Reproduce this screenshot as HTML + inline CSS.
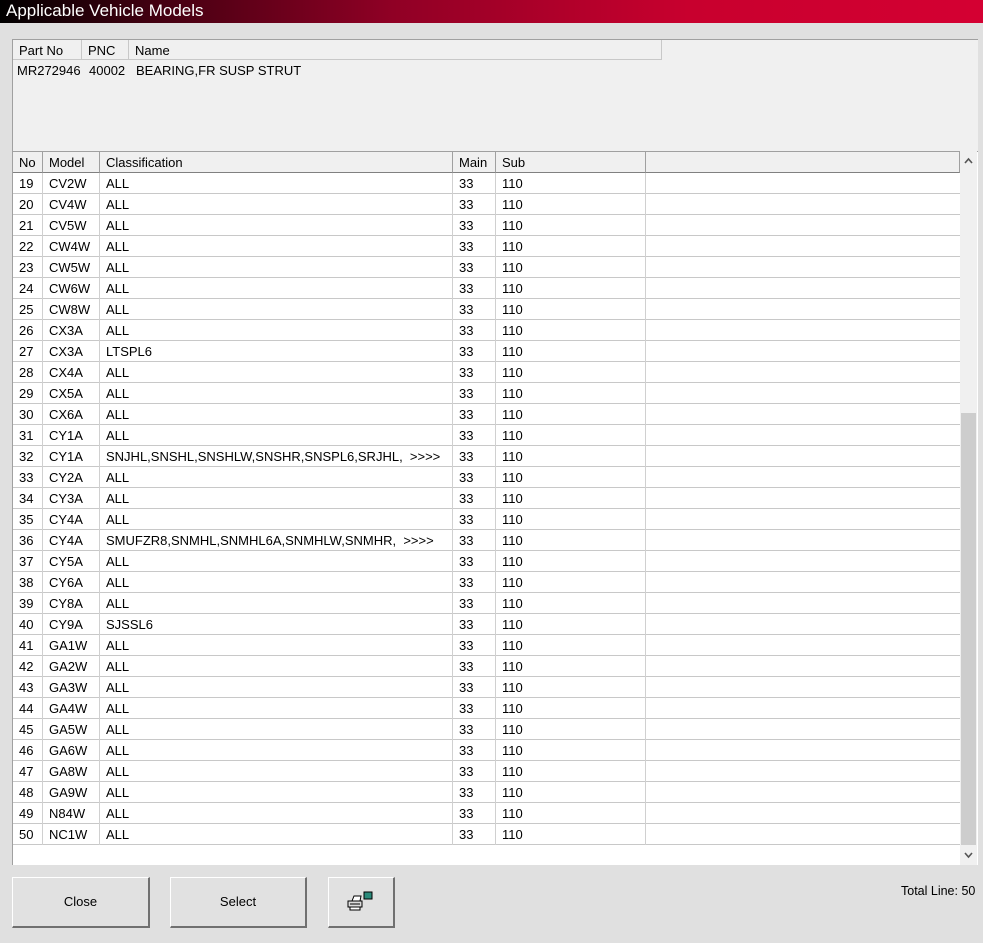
<!DOCTYPE html>
<html><head><meta charset="utf-8"><style>
*{margin:0;padding:0;box-sizing:border-box}
body{width:983px;height:943px;background:#e0e0e0;font-family:"Liberation Sans",Arial,sans-serif;font-size:13px;color:#000;position:relative;overflow:hidden}
.abs{position:absolute}
#title{left:0;top:0;width:983px;height:23px;background:linear-gradient(90deg,#000 0%,#400010 15%,#900025 40%,#c8002e 70%,#d40032 100%);color:#fff;font-size:17px;padding:2px 0 0 6px;line-height:18px}
#top{left:12px;top:39px;width:966px;height:112px;background:#f0f0f0;border-top:1px solid #a0a0a0;border-left:1px solid #a0a0a0}
.hd{position:absolute;top:0;height:20px;border-right:1px solid #c8c8c8;border-bottom:1px solid #c8c8c8;padding:3px 0 0 6px;background:#f0f0f0}
#grid{left:12px;top:151px;width:966px;height:714px;background:#fff;border-top:1px solid #a0a0a0;border-left:1px solid #a0a0a0}
.gh{position:absolute;top:0;height:21px;border-right:1px solid #a0a0a0;border-bottom:1px solid #808080;padding:3px 0 0 6px;background:#f0f0f0}
.row{position:absolute;left:0;width:947px;height:21px;border-bottom:1px solid #c8c8c8}
.c{position:absolute;top:0;height:21px;padding:3px 0 0 6px;border-right:1px solid #d0d0d0;white-space:nowrap}
#sb{left:960px;top:151px;width:17px;height:714px;background:#f0f0f0}
#thumb{left:961px;top:413px;width:15px;height:432px;background:#cdcdcd}
.btn{position:absolute;top:877px;height:51px;background:#e1e1e1;border:1px solid #fff;border-right:2px solid #707070;border-bottom:2px solid #707070;text-align:center;line-height:48px;font-size:13px}
</style></head><body>
<div id="title" class="abs">Applicable Vehicle Models</div>
<div id="top" class="abs">
<div class="hd" style="left:0;width:69px">Part No</div>
<div class="hd" style="left:69px;width:47px">PNC</div>
<div class="hd" style="left:116px;width:533px">Name</div>
<div class="abs" style="left:4px;top:23px">MR272946</div>
<div class="abs" style="left:76px;top:23px">40002</div>
<div class="abs" style="left:123px;top:23px">BEARING,FR SUSP STRUT</div>
</div>
<div id="grid" class="abs">
<div class="gh" style="left:0;width:30px">No</div>
<div class="gh" style="left:30px;width:57px">Model</div>
<div class="gh" style="left:87px;width:353px">Classification</div>
<div class="gh" style="left:440px;width:43px">Main</div>
<div class="gh" style="left:483px;width:150px">Sub</div>
<div class="gh" style="left:633px;width:314px"></div>
<div id="rows"></div>
</div>
<div id="sb" class="abs"><svg width="17" height="714" style="position:absolute;left:0;top:0"><path d="M5 12 L8.5 8 L12 12" fill="none" stroke="#555" stroke-width="1.6"/><path d="M5 702 L8.5 706 L12 702" fill="none" stroke="#555" stroke-width="1.6"/></svg></div>
<div id="thumb" class="abs"></div>
<div class="btn" style="left:12px;width:138px">Close</div>
<div class="btn" style="left:170px;width:137px">Select</div>
<div class="btn" style="left:328px;width:67px"><svg width="30" height="22" viewBox="0 0 30 22" style="margin-top:13px"><path d="M6 10 L8 5 L15 5 L14 10 Z" fill="#fff" stroke="#000"/><rect x="2" y="10" width="14" height="6" fill="#ddd" stroke="#000"/><line x1="4" y1="13" x2="14" y2="13" stroke="#000"/><rect x="4" y="16" width="10" height="3" fill="#fff" stroke="#000"/><rect x="18" y="1" width="8" height="7" fill="#2a8a7a" stroke="#000"/></svg></div>
<div class="abs" style="left:901px;top:884px;font-size:12.5px">Total Line: 50</div>
<script>
var d=[["CV2W","ALL"],["CV4W","ALL"],["CV5W","ALL"],["CW4W","ALL"],["CW5W","ALL"],["CW6W","ALL"],["CW8W","ALL"],["CX3A","ALL"],["CX3A","LTSPL6"],["CX4A","ALL"],["CX5A","ALL"],["CX6A","ALL"],["CY1A","ALL"],["CY1A","SNJHL,SNSHL,SNSHLW,SNSHR,SNSPL6,SRJHL,&nbsp;&nbsp;&gt;&gt;&gt;&gt;"],["CY2A","ALL"],["CY3A","ALL"],["CY4A","ALL"],["CY4A","SMUFZR8,SNMHL,SNMHL6A,SNMHLW,SNMHR,&nbsp;&nbsp;&gt;&gt;&gt;&gt;"],["CY5A","ALL"],["CY6A","ALL"],["CY8A","ALL"],["CY9A","SJSSL6"],["GA1W","ALL"],["GA2W","ALL"],["GA3W","ALL"],["GA4W","ALL"],["GA5W","ALL"],["GA6W","ALL"],["GA8W","ALL"],["GA9W","ALL"],["N84W","ALL"],["NC1W","ALL"]];
var h="";for(var i=0;i<d.length;i++){h+='<div class="row" style="top:'+(21+i*21)+'px"><div class="c" style="left:0;width:30px">'+(19+i)+'</div><div class="c" style="left:30px;width:57px">'+d[i][0]+'</div><div class="c" style="left:87px;width:353px">'+d[i][1]+'</div><div class="c" style="left:440px;width:43px">33</div><div class="c" style="left:483px;width:150px">110</div></div>';}
document.getElementById("rows").innerHTML=h;
</script>
</body></html>
